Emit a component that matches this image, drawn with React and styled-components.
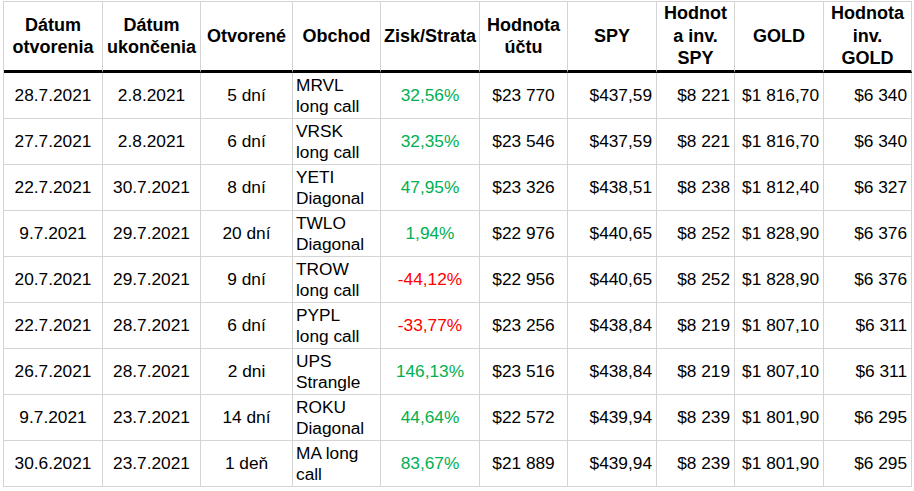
import React from 'react'
import styled, { createGlobalStyle } from 'styled-components'

const GlobalStyle = createGlobalStyle`
  html, body {
    margin: 0;
    padding: 0;
    background: #ffffff;
  }
  body {
    font-family: 'Liberation Sans', Arial, sans-serif;
    color: #000000;
  }
`;

const columns = [
  { title: ['Dátum', 'otvorenia'], width: 99, align: 'center' },
  { title: ['Dátum', 'ukončenia'], width: 98, align: 'center' },
  { title: ['Otvorené'], width: 92, align: 'center' },
  { title: ['Obchod'], width: 88, align: 'left' },
  { title: ['Zisk/Strata'], width: 99, align: 'center' },
  { title: ['Hodnota', 'účtu'], width: 88, align: 'center' },
  { title: ['SPY'], width: 89, align: 'right' },
  { title: ['Hodnot', 'a inv.', 'SPY'], width: 78, align: 'right' },
  { title: ['GOLD'], width: 89, align: 'right' },
  { title: ['Hodnota', 'inv.', 'GOLD'], width: 88, align: 'right' },
];

const rows = [
  ['28.7.2021', '2.8.2021', '5 dní', ['MRVL', 'long call'], '32,56%', '$23 770', '$437,59', '$8 221', '$1 816,70', '$6 340'],
  ['27.7.2021', '2.8.2021', '6 dní', ['VRSK', 'long call'], '32,35%', '$23 546', '$437,59', '$8 221', '$1 816,70', '$6 340'],
  ['22.7.2021', '30.7.2021', '8 dní', ['YETI', 'Diagonal'], '47,95%', '$23 326', '$438,51', '$8 238', '$1 812,40', '$6 327'],
  ['9.7.2021', '29.7.2021', '20 dní', ['TWLO', 'Diagonal'], '1,94%', '$22 976', '$440,65', '$8 252', '$1 828,90', '$6 376'],
  ['20.7.2021', '29.7.2021', '9 dní', ['TROW', 'long call'], '-44,12%', '$22 956', '$440,65', '$8 252', '$1 828,90', '$6 376'],
  ['22.7.2021', '28.7.2021', '6 dní', ['PYPL', 'long call'], '-33,77%', '$23 256', '$438,84', '$8 219', '$1 807,10', '$6 311'],
  ['26.7.2021', '28.7.2021', '2 dni', ['UPS', 'Strangle'], '146,13%', '$23 516', '$438,84', '$8 219', '$1 807,10', '$6 311'],
  ['9.7.2021', '23.7.2021', '14 dní', ['ROKU', 'Diagonal'], '44,64%', '$22 572', '$439,94', '$8 239', '$1 801,90', '$6 295'],
  ['30.6.2021', '23.7.2021', '1 deň', ['MA long', 'call'], '83,67%', '$21 889', '$439,94', '$8 239', '$1 801,90', '$6 295'],
];

const Sheet = styled.div`
  display: grid;
  grid-template-columns: ${(p) => p.$cols};
  grid-template-rows: 71px;
  grid-auto-rows: 46px;
  width: max-content;
  margin: 1px 0 0 3px;
  border-left: 1px solid #d4d4d4;
  border-top: 1px solid #d4d4d4;
`;

const HeaderCell = styled.div`
  box-sizing: border-box;
  display: flex;
  flex-direction: column;
  align-items: center;
  justify-content: center;
  border-right: 1px solid #d4d4d4;
  border-bottom: 3px solid #000000;
  font-size: 18px;
  font-weight: bold;
  line-height: 22.5px;
  text-align: center;
  white-space: nowrap;
  overflow: hidden;
`;

const Cell = styled.div`
  box-sizing: border-box;
  display: flex;
  flex-direction: column;
  justify-content: ${(p) => (p.$top ? 'flex-start' : 'center')};
  align-items: ${(p) =>
    p.$align === 'left' ? 'flex-start' : p.$align === 'right' ? 'flex-end' : 'center'};
  padding: ${(p) => (p.$top ? '2px 3px 0 3px' : '0 4px 0 4px')};
  border-right: 1px solid #d4d4d4;
  border-bottom: 1px solid #d4d4d4;
  font-size: 17.3px;
  line-height: 21px;
  color: ${(p) => p.$color || '#000000'};
  white-space: nowrap;
  overflow: hidden;
`;

const profitColor = (value) => (value.startsWith('-') ? '#ff0000' : '#00b050');

const App = () => {
  const cols = columns.map((c) => `${c.width}px`).join(' ');
  return (
    <>
      <GlobalStyle />
      <Sheet $cols={cols}>
        {columns.map((col, i) => (
          <HeaderCell key={`h${i}`}>
            {col.title.map((line) => (
              <span key={line}>{line}</span>
            ))}
          </HeaderCell>
        ))}
        {rows.map((row, r) =>
          row.map((value, c) =>
            Array.isArray(value) ? (
              <Cell key={`${r}-${c}`} $align="left" $top>
                {value.map((line) => (
                  <span key={line}>{line}</span>
                ))}
              </Cell>
            ) : (
              <Cell
                key={`${r}-${c}`}
                $align={columns[c].align}
                $color={c === 4 ? profitColor(value) : undefined}
              >
                {value}
              </Cell>
            )
          )
        )}
      </Sheet>
    </>
  );
};

export default App
